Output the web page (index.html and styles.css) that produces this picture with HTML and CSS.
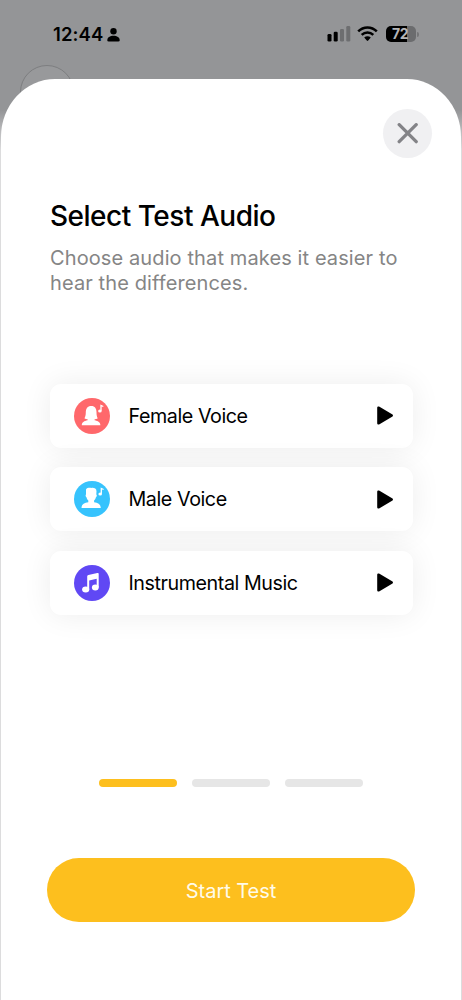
FILE: index.html
```html
<!DOCTYPE html>
<html lang="en">
<head>
<meta charset="utf-8">
<meta name="viewport" content="width=device-width, initial-scale=1">
<title>Select Test Audio</title>
<link rel="stylesheet" href="styles.css">
</head>
<body>
<div class="screen">
  <header class="status">
    <div class="status-left">
      <span class="clock">12:44</span>
      <svg class="person" width="13" height="14" viewBox="0 0 13 14"><circle cx="6.5" cy="3.2" r="3.2"/><path d="M.3 12.2C.3 9.4 3 7.7 6.5 7.7s6.200 1.700 6.200 4.500c0 .8-.4 1.200-1.200 1.200h-10C.7 13.400.3 13 .3 12.200Z"/></svg>
    </div>
    <div class="status-right">
      <svg width="24" height="16" viewBox="0 0 24 16"><rect x=".5" y="8" width="4" height="7.500" rx="1.300"/><rect x="6.700" y="5.800" width="4" height="9.700" rx="1.300"/><rect class="dim" x="13" y="3" width="4" height="12.500" rx="1.300"/><rect class="dim" x="19.300" y="0" width="4" height="15.500" rx="1.300"/></svg>
      <svg class="wifi" width="21" height="16" viewBox="0 0 21 16"><path class="arc" d="M1.200 5.300C6.500.1 14.500.1 19.800 5.300M4.700 8.900c3.300-3.200 8.300-3.200 11.600 0"/><path d="M7.200 11.600c1.900-1.700 4.700-1.700 6.600 0l-2.600 2.900c-.4.500-1 .5-1.400 0Z"/></svg>
      <div class="battery"><span>72</span></div>
      <i class="battery-tip"></i>
    </div>
  </header>
  <div class="back-circle"></div>
  <main class="sheet">
    <button class="close" aria-label="Close"><svg width="22" height="22" viewBox="0 0 22 22"><path d="M2.200 1.700l17 17M19.200 1.700l-17 17"/></svg></button>
    <h1>Select Test Audio</h1>
    <p class="subtitle">Choose audio that makes it easier to<br>hear the differences.</p>
    <div class="options">
      <div class="option">
        <svg class="avatar" viewBox="0 0 36 36"><circle cx="18" cy="18" r="18" fill="#ff686b"/><path fill="#fff" d="M17.300 8c3.700 0 5.200 2.700 5.200 6.200 0 2.900.4 4.500 1.300 6.100-.8.600-1.900.9-3.200 1v.9c3.400.7 5.800 2 5.800 5H7.800c0-3 2.400-4.300 5.800-5v-.9c-1.300-.1-2.400-.4-3.200-1 .9-1.600 1.400-3.200 1.400-6.100C11.800 10.700 13.500 8 17.300 8Z"/><path class="note" d="M27 12.700V7.500l2.300 1"/><ellipse cx="25.900" cy="12.900" rx="1.800" ry="1.500" fill="#fff"/></svg>
        <span class="label">Female Voice</span>
        <svg class="play" viewBox="0 0 16 19"><path d="M.2 1.800C.2.500 1.400 0 2.500.7l12.600 7.500c1.200.7 1.200 1.900 0 2.600L2.500 18.300C1.400 19 .2 18.500.2 17.200Z"/></svg>
      </div>
      <div class="option">
        <svg class="avatar" viewBox="0 0 36 36"><circle cx="18" cy="18" r="18" fill="#36c3fd"/><path fill="#fff" d="M12 8.500c1-1.800 3-1.700 5.300-1.600 2.400-.3 5.200.2 5.200 3.400l-.2 3.200c.9.300.6 2.300-.5 3-.4 1.800-1.200 2.500-1.700 3.100v1.700c3.600.6 6.300 1.500 6.700 5.700H7.500c.3-4.200 3.200-5.100 6.800-5.700v-1.700c-.6-.6-1.300-1.300-1.700-3.100-1.100-.7-1.300-2.700-.6-3Z"/><path class="note" d="M27.300 12.700V7.500l2.300 1"/><ellipse cx="26.200" cy="12.900" rx="1.800" ry="1.500" fill="#fff"/></svg>
        <span class="label">Male Voice</span>
        <svg class="play" viewBox="0 0 16 19"><path d="M.2 1.800C.2.500 1.400 0 2.500.7l12.600 7.500c1.200.7 1.200 1.900 0 2.600L2.500 18.300C1.400 19 .2 18.500.2 17.200Z"/></svg>
      </div>
      <div class="option">
        <svg class="avatar" viewBox="0 0 36 36"><circle cx="18" cy="18" r="18" fill="#6048f4"/><path fill="#fff" d="M13.200 11.500c0-.8.500-1.300 1.200-1.500l8.900-2c.8-.2 1.400.2 1.400 1v13.500h-2V13.700l-7.500 1.700v9.200h-2Z"/><ellipse cx="11.700" cy="24.500" rx="3.600" ry="2.900" fill="#fff"/><ellipse cx="21.300" cy="22.500" rx="3.400" ry="2.900" fill="#fff"/></svg>
        <span class="label">Instrumental Music</span>
        <svg class="play" viewBox="0 0 16 19"><path d="M.2 1.800C.2.500 1.400 0 2.500.7l12.600 7.500c1.200.7 1.200 1.900 0 2.600L2.500 18.300C1.400 19 .2 18.500.2 17.200Z"/></svg>
      </div>
    </div>
    <div class="steps"><i class="active"></i><i></i><i></i></div>
    <button class="start">Start Test</button>
  </main>
</div>
</body>
</html>
```
FILE: styles.css
```css
* { box-sizing: border-box; }
body { margin: 0; font-family: Inter, "Liberation Sans", sans-serif; color: #000; }
button { border: 0; padding: 0; font: inherit; }
svg { display: block; flex: none; }
.screen { position: relative; width: 462px; height: 1000px; overflow: hidden; padding-top: 24px; background: linear-gradient(#949597 0 110px, #dcdcdd 150px); }
.status { height: 55px; padding: 0 43px 0 53px; display: flex; justify-content: space-between; align-items: flex-start; }
.status-left { display: flex; align-items: center; gap: 4px; height: 21px; }
.clock { font-size: 18.5px; font-weight: 600; line-height: 21px; letter-spacing: .1px; }
.status-right { display: flex; align-items: center; height: 20px; }
.dim { fill: #6d6e70; }
.wifi { margin: 0 8px 0 6px; }
.arc { fill: none; stroke: #000; stroke-width: 2.500; }
.battery { width: 30px; height: 16px; border-radius: 5px; background: linear-gradient(90deg, #000 21.500px, #6b6c6e 21.500px); color: #b4b5b7; font-size: 14px; font-weight: 700; line-height: 16px; text-align: center; letter-spacing: -.5px; }
.battery span { margin-right: 2px; }
.battery-tip { width: 2px; height: 5px; margin-left: 1px; border-radius: 0 2px 2px 0; background: #747577; }
.back-circle { position: absolute; left: 20px; top: 65px; width: 54px; height: 54px; border: 1px solid #7d7e80; border-radius: 50%; background: #98999b; }
.sheet { position: relative; height: 921px; margin: 0 1px; padding: 30px 46px 0; border-radius: 54px 54px 0 0 / 58px 58px 0 0; background: #fff; }
.close { display: flex; align-items: center; justify-content: center; width: 49px; height: 49px; margin: 0 -17px 0 auto; border-radius: 50%; background: #f0f0f2; }
.close path { fill: none; stroke: #838387; stroke-width: 3.300; stroke-linecap: round; }
h1 { margin: 41px 3px 0; font-size: 28px; font-weight: 500; line-height: 34px; letter-spacing: -.49px; white-space: nowrap; }
.subtitle { margin: 13px 3px 0; color: #858585; font-size: 20px; line-height: 25px; letter-spacing: .11px; white-space: nowrap; }
.options { display: grid; gap: 19.500px; margin: 87.500px 2.500px 0 3px; }
.option { display: flex; align-items: center; height: 64px; padding: 0 19.500px 0 24px; border-radius: 11px; background: #fff; box-shadow: 0 0 30px rgba(0, 0, 0, .075); }
.avatar { width: 36px; height: 36px; }
.note { fill: none; stroke: #fff; stroke-width: 1.300; }
.label { margin-left: 18.500px; font-size: 19.700px; line-height: 24px; letter-spacing: -.43px; white-space: nowrap; }
.play { width: 16px; height: 19px; margin-left: auto; }
.steps { display: flex; justify-content: center; gap: 14.500px; margin-top: 164.500px; }
.steps i { width: 78.500px; height: 8px; border-radius: 4px; background: #e6e6e6; }
.steps .active { background: #fdbf1e; }
.start { display: block; width: 368px; height: 64px; margin-top: 71px; padding-top: 2px; border-radius: 32px; background: #fdbf1e; color: #fffbea; font-size: 20px; letter-spacing: -.05px; }
```
